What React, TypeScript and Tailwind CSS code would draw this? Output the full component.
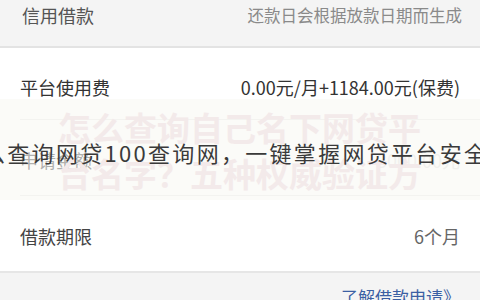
const rows = [
  { label: "平台使用费", value: "0.00元/月+1184.00元(保费)", h: "h-[72px]", pt: "pt-[6px]", tone: "text-[#333]", vtone: "text-[#333]" },
  { label: "申请金额", value: "3000.00元", h: "h-[76px]", pt: "pt-[4px]", tone: "text-[#444]", vtone: "text-[#e4e4e4]" },
];

export default function App() {
  return (
    <div className="relative w-[480px] h-[300px] overflow-hidden bg-white font-['Noto_Sans_CJK_SC','Noto_Sans',sans-serif]">
      {/* top grey strip */}
      <div className="h-[46px] bg-[#f4f4f4] flex items-start justify-between pl-[22px] pr-[18px] pt-[4px]">
        <span className="text-[18px] leading-[22px] text-[#555]">信用借款</span>
        <span className="text-[16.5px] leading-[22px] text-[#8a8a8a]">还款日会根据放款日期而生成</span>
      </div>
      <div className="h-[2px] bg-[#e3e3e3]" />

      {/* detail rows */}
      <div className="pl-[20px]">
        {rows.map((r) => (
          <div
            key={r.label}
            className={`${r.h} ${r.pt} flex items-center justify-between pr-[20px] border-b border-[#ececec]`}
          >
            <span className={`text-[18px] leading-[24px] ${r.tone}`}>{r.label}</span>
            <span className={`text-[18px] leading-[24px] ${r.vtone}`}>{r.value}</span>
          </div>
        ))}
        <div className="h-[75px] pt-[5px] flex items-center justify-between pr-[20px]">
          <span className="text-[18px] leading-[24px] text-[#444]">借款期限</span>
          <span className="text-[18px] leading-[24px] text-[#666]">6个月</span>
        </div>
      </div>
      <div className="h-[2px] bg-[#e6e6e6]" />

      {/* bottom grey area */}
      <div className="h-[40px] bg-[#f4f4f4] flex justify-end pr-[20px] pt-[13px]">
        <span className="text-[17px] leading-[22px] text-[#3b5fa3]">了解借款申请》</span>
      </div>

      {/* watermark band */}
      <div className="absolute left-0 right-0 top-[99px] h-[101px] bg-[#f8f8f4]/60">
        <div className="absolute left-[58px] top-[5px] text-[33px] leading-[46px] font-bold text-[#f3eaea] whitespace-nowrap">
          <div>怎么查询自己名下网贷平</div>
          <div>台名字？五种权威验证方</div>
        </div>
        <div className="absolute left-[-17px] top-[40px] text-[22px] leading-[26px] tracking-[2.3px] text-[#3a3a3a] whitespace-nowrap">
          么查询网贷100查询网，一键掌握网贷平台安全
        </div>
      </div>
    </div>
  );
}
